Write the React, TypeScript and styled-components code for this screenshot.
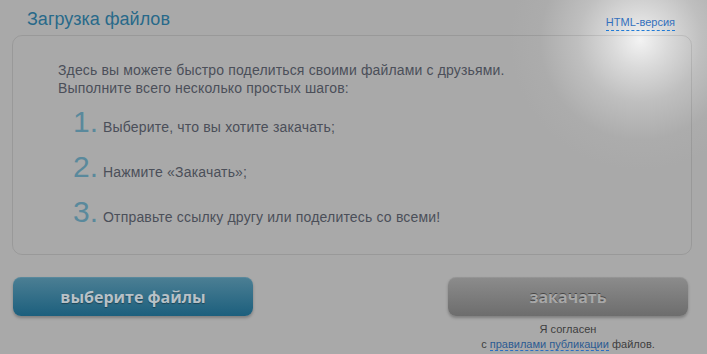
import React from 'react';
import styled, { createGlobalStyle } from 'styled-components';

const GlobalStyle = createGlobalStyle`
    html, body {
        margin: 0;
        padding: 0;
    }
    body {
        width: 707px;
        height: 354px;
        overflow: hidden;
        font-family: "Liberation Sans", Arial, sans-serif;
        background: radial-gradient(circle at 640px 40px, #f3f3f3 0, #dadada 28px, #bfbfbf 62px, #acacac 100px, #a9a9a9 130px);
    }
`;

const Page = styled.div`
    display: flex;
    flex-direction: column;
    padding: 0 15px 0 12px;
`;

const Header = styled.div`
    display: flex;
    justify-content: space-between;
    align-items: flex-end;
    height: 35px;
    padding: 0 17px 0 15px;
    box-sizing: border-box;
`;

const Title = styled.h1`
    margin: 0 0 6px;
    font-size: 18px;
    font-weight: normal;
    color: #28698a;
    line-height: 20px;
`;

const DashLink = styled.a`
    color: #3370bd;
    text-decoration: none;
    border-bottom: 1px dashed #1f7ad6;
    cursor: pointer;
`;

const VersionLink = styled(DashLink)`
    font-size: 11px;
    line-height: 13px;
    margin-bottom: 4px;
    padding-bottom: 1px;
`;

const Panel = styled.div`
    height: 220px;
    box-sizing: border-box;
    border: 1px solid rgba(0, 0, 0, 0.09);
    border-radius: 10px;
    padding: 25px 45px 0;
`;

const Intro = styled.p`
    margin: 0;
    font-size: 14px;
    line-height: 18px;
    letter-spacing: 0.15px;
    color: #4b4f59;
`;

const Steps = styled.ol`
    list-style: none;
    margin: 8px 0 0;
    padding: 0 0 0 15px;
    display: flex;
    flex-direction: column;
    gap: 11px;
`;

const Step = styled.li`
    display: flex;
    align-items: baseline;
    height: 34px;
    font-size: 14px;
    letter-spacing: 0.18px;
    color: #4b4f59;
`;

const Num = styled.span`
    width: 30px;
    font-size: 30px;
    line-height: 34px;
    letter-spacing: 0;
    color: #5a899c;
`;

const Actions = styled.div`
    display: flex;
    justify-content: space-between;
    margin-top: 22px;
    padding: 0 4px 0 1px;
`;

const Column = styled.div`
    display: flex;
    flex-direction: column;
    align-items: center;
`;

const Button = styled.button<{ $active?: boolean }>`
    width: 240px;
    height: 39px;
    border: none;
    border-radius: 8px;
    font-family: "Open Sans", "Liberation Sans", sans-serif;
    font-weight: 700;
    font-size: 16px;
    cursor: pointer;
    background: ${p => p.$active
        ? 'linear-gradient(#4c7f94, #1c5f7d)'
        : 'linear-gradient(#8c8c8c, #6d6d6d)'};
    color: ${p => p.$active ? '#b8c1c7' : '#a7a7a7'};
    text-shadow: ${p => p.$active ? '0 1px 1px rgba(0,0,0,0.35)' : '0 -1px 0 rgba(0,0,0,0.45)'};
    box-shadow: 0 2px 3px rgba(0, 0, 0, 0.25), inset 0 1px 0 rgba(255, 255, 255, 0.08);
`;

const Agree = styled.div`
    margin-top: 6px;
    font-size: 11px;
    line-height: 15px;
    color: #3e3e3e;
    text-align: center;
`;

const RulesLink = styled(DashLink)`
    color: #2c5b92;
    border-bottom-color: #2a6fc4;
`;

const steps = [
    'Выберите, что вы хотите закачать;',
    'Нажмите «Закачать»;',
    'Отправьте ссылку другу или поделитесь со всеми!',
];

const App: React.FC = () => (
    <>
        <GlobalStyle />
        <Page>
            <Header>
                <Title>Загрузка файлов</Title>
                <VersionLink>HTML-версия</VersionLink>
            </Header>
            <Panel>
                <Intro>
                    Здесь вы можете быстро поделиться своими файлами с друзьями.<br />
                    Выполните всего несколько простых шагов:
                </Intro>
                <Steps>
                    {steps.map((s, i) => (
                        <Step key={i}>
                            <Num>{i + 1}.</Num>
                            {s}
                        </Step>
                    ))}
                </Steps>
            </Panel>
            <Actions>
                <Button $active>выберите файлы</Button>
                <Column>
                    <Button>закачать</Button>
                    <Agree>
                        Я согласен<br />
                        с <RulesLink>правилами публикации</RulesLink> файлов.
                    </Agree>
                </Column>
            </Actions>
        </Page>
    </>
);

export default App;
